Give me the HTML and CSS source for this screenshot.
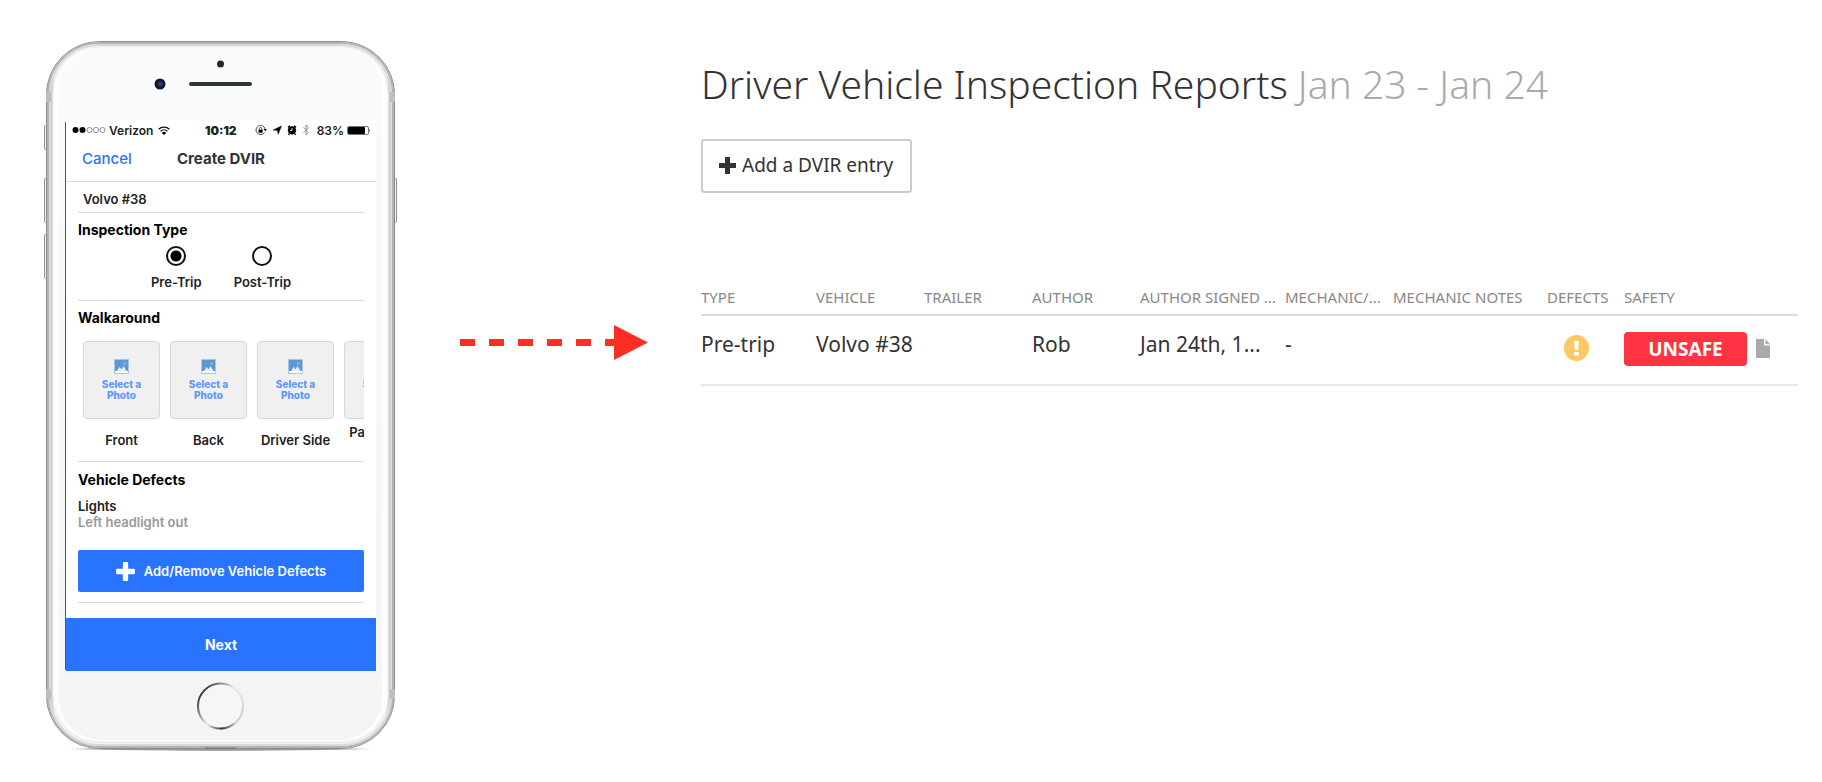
FILE: index.html
```
<!DOCTYPE html>
<html lang="en">
<head>
<meta charset="UTF-8" />
<meta name="viewport" content="width=device-width, initial-scale=1" />
<title>Driver Vehicle Inspection Reports</title>
<link rel="stylesheet" href="styles.css">
</head>
<body>

<!-- shared icons -->
<svg class="defs" width="0" height="0" aria-hidden="true">
  <symbol id="photo" viewBox="0 0 15 15">
    <rect width="15" height="15" fill="#a9c6e6"/>
    <rect x="1" y="1" width="13" height="11" fill="#5f97d3"/>
    <rect x="1" y="12" width="13" height="2" fill="#fff"/>
    <path d="M3 12 5.500 8l2 2.300L9.500 7l3 5z" fill="#e4eefa"/>
    <circle cx="10.500" cy="4.500" r="1.300" fill="#8fb7e4"/>
  </symbol>
  <symbol id="plus" viewBox="0 0 18 18">
    <path d="M6.500 1q0-1 1-1h3q1 0 1 1v5.500H17q1 0 1 1v3q0 1-1 1h-5.500V17q0 1-1 1h-3q-1 0-1-1v-5.500H1q-1 0-1-1v-3q0-1 1-1h5.500z" fill="currentColor"/>
  </symbol>
</svg>

<main class="page">

  <section class="phone">
    <svg class="frame" viewBox="0 0 354 720" aria-hidden="true">
      <defs>
        <linearGradient id="metal" x1="0" x2="1" y1="0" y2="0">
          <stop offset="0" stop-color="#8b8c8c"/>
          <stop offset="0.012" stop-color="#c4c5c5"/>
          <stop offset="0.026" stop-color="#f0f1f1"/>
          <stop offset="0.974" stop-color="#f0f1f1"/>
          <stop offset="0.988" stop-color="#c4c5c5"/>
          <stop offset="1" stop-color="#8b8c8c"/>
        </linearGradient>
        <linearGradient id="face" x1="0" x2="0" y1="0" y2="1">
          <stop offset="0" stop-color="#f8fafc"/>
          <stop offset="1" stop-color="#f3f4f6"/>
        </linearGradient>
        <linearGradient id="ring" x1="0" x2="1" y1="0.200" y2="0.900">
          <stop offset="0" stop-color="#1c1d20"/>
          <stop offset="0.280" stop-color="#999"/>
          <stop offset="0.480" stop-color="#e9e9ea"/>
          <stop offset="0.750" stop-color="#dcdcdd"/>
          <stop offset="1" stop-color="#c4c4c6"/>
        </linearGradient>
        <linearGradient id="ring-low" x1="0" x2="1" y1="0" y2="0">
          <stop offset="0" stop-color="#ddd"/>
          <stop offset="0.500" stop-color="#333"/>
          <stop offset="1" stop-color="#bbb"/>
        </linearGradient>
        <radialGradient id="shadow">
          <stop offset="0.700" stop-color="#999"/>
          <stop offset="1" stop-color="#fff"/>
        </radialGradient>
      </defs>
      <ellipse cx="177" cy="713" rx="158" ry="2" fill="url(#shadow)"/>
      <g fill="#f4f4f4" stroke="#8f9090">
        <rect x="1.500" y="89.500" width="4" height="24" rx="1"/>
        <rect x="1.500" y="142.500" width="4" height="44" rx="1"/>
        <rect x="1.500" y="198.500" width="4" height="44" rx="1"/>
        <rect x="349.500" y="142.500" width="4" height="44" rx="1"/>
      </g>
      <rect x="3.500" y="5.500" width="348" height="707" rx="53" fill="url(#metal)" stroke="#8b8c8c"/>
      <rect x="5" y="7" width="345" height="704" rx="51" fill="none" stroke="#b3b4b4" stroke-width="2"/>
      <rect x="7" y="9" width="341" height="700" rx="49" fill="none" stroke="#d9dada" stroke-width="2"/>
      <path d="M3 56h5v10H3zM347 56h5v10h-5zM3 653h5v10H3zM347 653h5v10h-5z" fill="#bdbebe"/>
      <rect x="10" y="11" width="335" height="695" rx="46" fill="#fdfdfe" stroke="#ededee"/>
      <rect x="16" y="12" width="323" height="692" rx="42" fill="url(#face)"/>
      <path d="M162 712h31" stroke="#777" stroke-width="1"/>
      <circle cx="177.500" cy="28" r="3.500" fill="#242627"/>
      <circle cx="117" cy="48" r="5.500" fill="#15171f"/>
      <circle cx="117.500" cy="48" r="2.500" fill="#1f3a86"/>
      <rect x="146" y="46" width="63" height="4" rx="2" fill="#2f3435"/>
      <circle cx="177.500" cy="670" r="22.500" fill="#f5f6f7" stroke="url(#ring)" stroke-width="2"/>
      <path d="M165 689a22.500 22.500 0 0 0 27-2" fill="none" stroke="url(#ring-low)" stroke-width="2"/>
      <path d="M22.500 86v548" stroke="#555"/>
    </svg>

    <div class="screen">
      <div class="status">
        <svg class="signal" viewBox="0 0 34 8" aria-hidden="true">
          <circle cx="3.500" cy="4" r="3"/><circle cx="10.500" cy="4" r="3"/>
          <g fill="none" stroke="#777" stroke-width="0.800"><circle cx="17.500" cy="4" r="2.600"/><circle cx="24" cy="4" r="2.600"/><circle cx="30.500" cy="4" r="2.600"/></g>
        </svg>
        <span>Verizon</span>
        <svg class="wifi" viewBox="0 0 12 9" aria-hidden="true">
          <path d="M.6 3.300a7.600 7.600 0 0 1 10.800 0M2.500 5.300a5 5 0 0 1 7 0" fill="none" stroke="#111" stroke-width="1.300"/>
          <path d="M6 9 3.900 6.900a3 3 0 0 1 4.200 0z"/>
        </svg>
        <b class="clock">10:12</b>
        <svg class="indicators" viewBox="0 0 56 12" aria-hidden="true">
          <path d="M9.500 8.500A4.600 4.600 0 1 1 10.100 5" fill="none" stroke="#555" stroke-width="1"/>
          <path d="M8.500 5h3.500l-1.700 2.300zM3.600 5.700h4v3h-4z"/>
          <path d="M4.400 6V4.700a1.200 1.200 0 0 1 2.400 0V6" fill="none" stroke="#222" stroke-width="0.800"/>
          <path d="M26.500 2 23.200 10.300l-.8-3.700-4.200-.7z" stroke="#111" stroke-width="0.500"/>
          <circle cx="37" cy="6.400" r="4.200"/>
          <path d="M33 3.400 35 1.700M41 3.400l-2-1.700M34.300 9.800l-.9 1M39.700 9.800l.9 1" stroke="#000" stroke-width="1.500"/>
          <path d="M37 6.400V4M37 6.400h-1.800" stroke="#fff" stroke-width="0.900"/>
          <path d="M48.500 3.300l5 5L51 11V1l2.500 2.600-5 5" fill="none" stroke="#888" stroke-width="0.900"/>
        </svg>
        <span class="percent">83%</span>
        <svg class="battery" viewBox="0 0 24 9" aria-hidden="true">
          <rect x="0.500" y="0.500" width="21" height="8" rx="1.500" fill="none" stroke="#777"/>
          <rect x="1" y="1" width="17" height="7" rx="1"/>
          <path d="M22.500 3q1.500 1.500 0 3z"/>
        </svg>
      </div>

      <header class="nav">
        <button class="cancel" type="button">Cancel</button>
        <h2>Create DVIR</h2>
      </header>

      <form class="form">
        <input class="vehicle" type="text" value="Volvo #38" aria-label="Vehicle">

        <fieldset class="block types">
          <legend class="heading">Inspection Type</legend>
          <div class="options">
            <label><input type="radio" name="type" checked>Pre-Trip</label>
            <label><input type="radio" name="type">Post-Trip</label>
          </div>
        </fieldset>

        <div class="block walk">
          <h3 class="heading">Walkaround</h3>
          <div class="photos">
            <div class="photo">
              <button type="button" aria-labelledby="front"><svg><use href="#photo"/></svg>Select a<br>Photo</button>
              <span id="front">Front</span>
            </div>
            <div class="photo">
              <button type="button" aria-labelledby="back"><svg><use href="#photo"/></svg>Select a<br>Photo</button>
              <span id="back">Back</span>
            </div>
            <div class="photo">
              <button type="button" aria-labelledby="driver"><svg><use href="#photo"/></svg>Select a<br>Photo</button>
              <span id="driver">Driver Side</span>
            </div>
            <div class="photo tall">
              <button type="button" aria-labelledby="passenger"><svg><use href="#photo"/></svg>Select a<br>Photo</button>
              <span id="passenger">Passenger<br>Side</span>
            </div>
          </div>
        </div>

        <div class="block defects">
          <h3 class="heading">Vehicle Defects</h3>
          <p class="defect">Lights</p>
          <p class="note">Left headlight out</p>
          <button class="add-defect" type="button"><svg><use href="#plus"/></svg>Add/Remove Vehicle Defects</button>
        </div>
      </form>

      <button class="next" type="button">Next</button>
    </div>
  </section>

  <svg class="arrow" viewBox="0 0 188 36" aria-hidden="true">
    <path d="M0 17.500h154" stroke="#ff2d23" stroke-width="7" stroke-dasharray="15 14"/>
    <path d="M154 0v35l34-17.500z" fill="#ff2d23"/>
  </svg>

  <section class="report">
    <h1>Driver Vehicle Inspection Reports <small>Jan 23 - Jan 24</small></h1>
    <button class="add-entry" type="button"><svg viewBox="0 0 17 17"><path d="M6 0h5v6h6v5h-6v6H6v-6H0V6h6z" fill="#333"/></svg>Add a DVIR entry</button>

    <table>
      <colgroup>
        <col class="c-type"><col class="c-std"><col class="c-std"><col class="c-std"><col class="c-signed">
        <col class="c-std"><col class="c-notes"><col class="c-defects"><col>
      </colgroup>
      <thead>
        <tr>
          <th>Type</th>
          <th>Vehicle</th>
          <th>Trailer</th>
          <th>Author</th>
          <th>Author Signed ...</th>
          <th>Mechanic/...</th>
          <th>Mechanic Notes</th>
          <th>Defects</th>
          <th>Safety</th>
        </tr>
      </thead>
      <tbody>
        <tr>
          <td>Pre-trip</td>
          <td>Volvo #38</td>
          <td></td>
          <td>Rob</td>
          <td>Jan 24th, 1...</td>
          <td>-</td>
          <td></td>
          <td>
            <svg class="warn" viewBox="0 0 25 26" role="img" aria-label="Has defects">
              <ellipse cx="12.500" cy="13" rx="12.500" ry="13" fill="#fdc967"/>
              <path d="M10 6h5l-1 9h-3zM10.200 17h4.600v3.500h-4.600z" fill="#fff"/>
            </svg>
          </td>
          <td>
            <div class="safety">
              <span class="badge">UNSAFE</span>
              <a href="#report" aria-label="Open report"><svg viewBox="0 0 14 19"><path d="M0 0h8v6.500h6V19H0zM9.500 0 14 5.200H9.500z" fill="#aaa"/></svg></a>
            </div>
          </td>
        </tr>
      </tbody>
    </table>
  </section>

</main>

</body>
</html>
```
FILE: styles.css
```
* {
  box-sizing: border-box;
}
body {
  margin: 0;
  background: #fff;
  color: #333;
  font-family: "Noto Sans", "Liberation Sans", sans-serif;
}
button, input {
  font: inherit;
  color: inherit;
}
button {
  cursor: pointer;
}
h1, h2, h3, p {
  margin: 0;
}
.defs {
  position: absolute;
}
.page {
  display: flex;
  align-items: flex-start;
  padding: 36px 24px 24px 43px;
}

/* phone */
.phone {
  position: relative;
  flex: none;
  width: 354px;
  padding: 84px 21px 85px 23px;
  font-family: Inter, "Liberation Sans", sans-serif;
  font-size: 13px;
  font-weight: 600;
  color: #222;
}
.frame {
  position: absolute;
  inset: 0;
  width: 354px;
  height: 720px;
}
.screen {
  position: relative;
  background: #fff;
}
.status {
  display: flex;
  align-items: center;
  height: 20px;
  padding: 0 5px 0 6px;
  font-size: 12px;
}
.signal {
  width: 34px;
  height: 8px;
  margin-right: 3px;
}
.wifi {
  width: 12px;
  height: 9px;
  margin-left: 5px;
}
.clock {
  margin-left: auto;
}
.indicators {
  width: 56px;
  height: 12px;
  margin-left: 18px;
}
.percent {
  margin: 0 3px 0 6px;
}
.battery {
  width: 24px;
  height: 9px;
}
.nav {
  display: grid;
  grid-template-columns: 1fr auto 1fr;
  align-items: center;
  height: 42px;
  padding: 0 16px 5px;
  border-bottom: 1px solid #dcdcdc;
}
.nav h2 {
  font-size: 15px;
  font-weight: 700;
  color: #333;
}
.cancel {
  justify-self: start;
  padding: 0;
  border: 0;
  background: none;
  font-size: 15px;
  font-weight: 500;
  color: #2874ff;
}
.form {
  padding: 0 12px;
}
.vehicle {
  display: block;
  width: 100%;
  height: 31px;
  padding: 3px 5px 0;
  border: 0;
  border-bottom: 1px solid #dcdcdc;
  background: none;
}
.block {
  margin: 0;
  padding: 0;
  border: 0;
  border-bottom: 1px solid #dcdcdc;
}
.heading {
  padding: 0;
  font-size: 14px;
  line-height: 16px;
  font-weight: 700;
  color: #000;
}
.types {
  height: 88px;
  padding-top: 9px;
}
.types .heading {
  float: left;
  width: 100%;
}
.options {
  display: flex;
  clear: both;
  justify-content: center;
  gap: 32px;
  padding-top: 8px;
}
.options label {
  display: flex;
  flex-direction: column;
  align-items: center;
  gap: 8px;
  line-height: 16px;
}
.options input {
  appearance: none;
  width: 20px;
  height: 20px;
  margin: 0;
  border: 2px solid #111;
  border-radius: 50%;
}
.options input:checked {
  background: radial-gradient(circle, #000 5px, #fff 6px);
}
.walk {
  height: 161px;
  padding-top: 9px;
}
.photos {
  display: flex;
  gap: 10px;
  margin-top: 15px;
  padding-left: 5px;
  overflow: hidden;
}
.photo {
  flex: none;
  width: 77px;
  text-align: center;
  white-space: nowrap;
  line-height: 16px;
}
.photo button {
  display: block;
  width: 100%;
  height: 78px;
  padding: 0;
  margin-bottom: 13px;
  border: 1px solid #d8d8d8;
  border-radius: 4px;
  background: #f0f0f0;
  font-size: 10px;
  line-height: 11px;
  font-weight: 800;
  color: #5e98ff;
}
.tall button {
  margin-bottom: 5px;
}
.photo svg {
  display: block;
  width: 15px;
  height: 15px;
  margin: 0 auto 5px;
}
.defects {
  height: 141px;
  padding-top: 10px;
}
.defect {
  margin-top: 10px;
  line-height: 16px;
}
.note {
  line-height: 16px;
  color: #999;
}
.add-defect {
  display: flex;
  align-items: center;
  justify-content: center;
  gap: 9px;
  width: 100%;
  height: 42px;
  margin-top: 20px;
  border: 0;
  border-radius: 2px;
  background: #2874ff;
  color: #fff;
}
.add-defect svg {
  width: 19px;
  height: 19px;
}
.next {
  display: block;
  width: 100%;
  height: 53px;
  margin-top: 15px;
  border: 0;
  background: #2874ff;
  font-size: 14px;
  font-weight: 700;
  color: #fff;
}

.arrow {
  flex: none;
  width: 188px;
  height: 36px;
  margin: 289px 53px 0 63px;
}

/* report */
.report {
  flex: 1;
  min-width: 0;
  padding-top: 25px;
}
h1 {
  font-size: 39px;
  line-height: 46px;
  font-weight: 300;
}
h1 small {
  font-size: inherit;
  color: #aaa;
}
.add-entry {
  display: flex;
  align-items: center;
  gap: 6px;
  height: 54px;
  margin-top: 32px;
  padding: 0 17px 2px 16px;
  border: 2px solid #ccc;
  border-radius: 3px;
  background: #fff;
  font-size: 19px;
}
.add-entry svg {
  width: 17px;
  height: 17px;
}
table {
  width: 100%;
  margin-top: 87px;
  table-layout: fixed;
  border-collapse: collapse;
  text-align: left;
}
.c-type {
  width: 115px;
}
.c-std {
  width: 108px;
}
.c-signed {
  width: 145px;
}
.c-notes {
  width: 154px;
}
.c-defects {
  width: 77px;
}
th, td {
  padding: 0;
  white-space: nowrap;
}
th {
  height: 35px;
  border-bottom: 2px solid #ddd;
  font-size: 15px;
  font-weight: 400;
  text-transform: uppercase;
  color: #888;
}
td {
  height: 70px;
  padding-bottom: 12px;
  border-bottom: 2px solid #e8e8e8;
  font-size: 21px;
}
.warn {
  display: block;
  width: 25px;
  height: 26px;
  margin: 8px 0 0 17px;
}
.safety {
  display: flex;
  align-items: center;
  gap: 9px;
  padding-top: 9px;
}
.badge {
  width: 123px;
  border-radius: 4px;
  background: #ff3341;
  font-size: 19px;
  line-height: 34px;
  font-weight: 700;
  text-align: center;
  color: #fff;
}
.safety svg {
  display: block;
  width: 14px;
  height: 19px;
}
```
